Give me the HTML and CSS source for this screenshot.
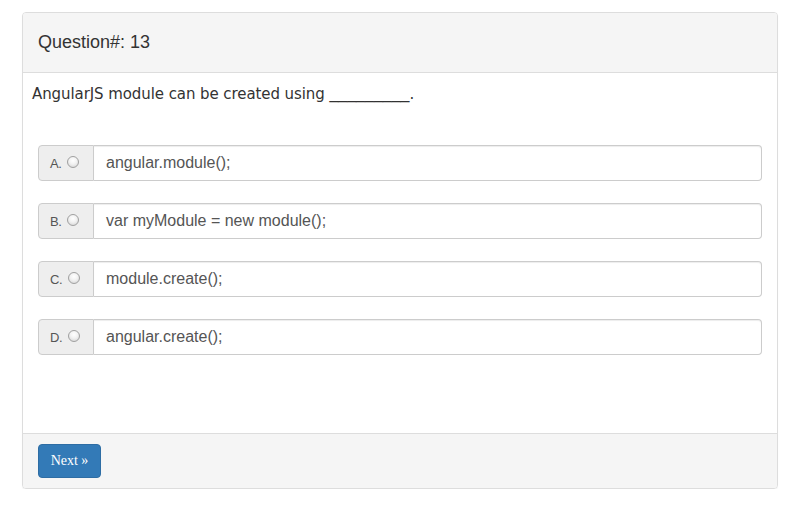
FILE: index.html
```html
<!DOCTYPE html>
<html>
<head>
<meta charset="utf-8">
<link rel="stylesheet" href="styles.css">
</head>
<body>
<div class="page">
  <div class="panel">
    <div class="panel-heading">Question#: 13</div>
    <div class="panel-body">
      <p class="question">AngularJS module can be created using <span class="blank">_________</span>.</p>
      <div class="options">
        <div class="option"><span class="addon">A.<span class="radio"></span></span><span class="field">angular.module();</span></div>
        <div class="option"><span class="addon">B.<span class="radio"></span></span><span class="field">var myModule = new module();</span></div>
        <div class="option"><span class="addon">C.<span class="radio"></span></span><span class="field">module.create();</span></div>
        <div class="option"><span class="addon">D.<span class="radio"></span></span><span class="field">angular.create();</span></div>
      </div>
    </div>
    <div class="panel-footer"><button class="btn">Next »</button></div>
  </div>
</div>
</body>
</html>
```
FILE: styles.css
```css
html, body { margin: 0; padding: 0; background: #fff; }
.page { padding: 12px 14px 0 22px; }
.panel {
  border: 1px solid #ddd;
  border-radius: 4px;
  height: 475px;
  display: flex;
  flex-direction: column;
  box-shadow: 0 1px 1px rgba(0,0,0,0.05);
}
.panel-heading {
  background: #f5f5f5;
  border-bottom: 1px solid #ddd;
  height: 59px;
  padding: 0 15px;
  display: flex;
  align-items: center;
  font-family: "Liberation Sans", Arial, sans-serif;
  font-size: 18px;
  color: #333;
  border-radius: 3px 3px 0 0;
}
.panel-body { flex: 1; padding: 0 15px 0 9px; }
.question {
  margin: 11px 0 0 0;
  font-family: "DejaVu Sans", Verdana, sans-serif;
  font-size: 15px;
  color: #333;
  line-height: 20px;
  letter-spacing: -0.08px;
}
.blank { font-family: "Liberation Sans", Arial, sans-serif; font-size: 16px; letter-spacing: 0; }
.options { display: flex; flex-direction: column; gap: 22px; margin: 41px 0 0 6px; }
.option { display: flex; height: 36px; font-family: "Liberation Sans", Arial, sans-serif; }
.addon {
  width: 56px;
  box-sizing: border-box;
  background: #eee;
  border: 1px solid #ccc;
  border-radius: 4px 0 0 4px;
  display: flex;
  align-items: center;
  padding-left: 11px;
  font-size: 13px;
  color: #555;
  letter-spacing: -0.5px;
}
.radio {
  width: 12px; height: 12px;
  border-radius: 50%;
  border: 1px solid #a0a0a0;
  background: radial-gradient(circle at 50% 35%, #fff 0%, #f2f2f2 45%, #cfcfcf 100%);
  margin-left: 6px;
  margin-top: -3px;
  box-sizing: border-box;
}
.field {
  flex: 1;
  border: 1px solid #ccc;
  border-left: none;
  border-radius: 0 4px 4px 0;
  display: flex;
  align-items: center;
  padding-left: 12px;
  font-size: 16px;
  color: #555;
  box-shadow: inset 0 1px 1px rgba(0,0,0,0.075);
}
.panel-footer {
  background: #f5f5f5;
  border-top: 1px solid #ddd;
  height: 55px;
  padding: 10px 15px;
  box-sizing: border-box;
  border-radius: 0 0 3px 3px;
}
.btn {
  width: 63px; height: 34px;
  background: #337ab7;
  border: 1px solid #2e6da4;
  border-radius: 4px;
  color: #fff;
  font-family: "Liberation Serif", "Times New Roman", serif;
  font-size: 14px;
  padding: 0;
}
```
